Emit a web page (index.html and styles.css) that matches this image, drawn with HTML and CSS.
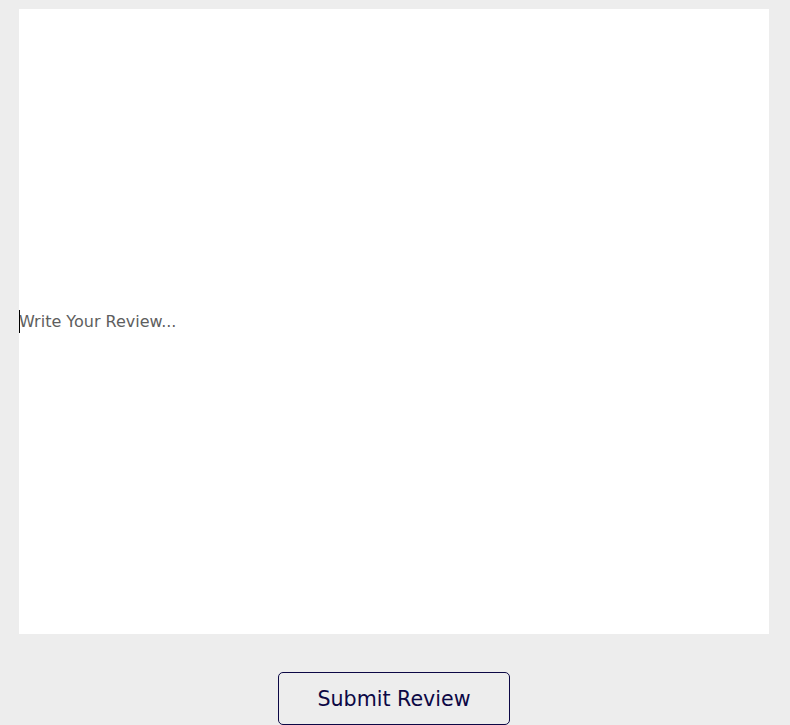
FILE: index.html
```html
<!DOCTYPE html>
<html lang="en">
<head>
<meta charset="utf-8">
<title>Review</title>
<link rel="stylesheet" href="styles.css">
</head>
<body>
<form class="review-form">
  <div class="field">
    <input class="review-input" type="text" placeholder="Write Your Review..." autofocus>
    <span class="caret"></span>
  </div>
  <div class="actions">
    <button class="submit-btn" type="button">Submit Review</button>
  </div>
</form>
</body>
</html>
```

FILE: styles.css
```css
html, body {
  margin: 0;
  padding: 0;
  background: #ededed;
}
body {
  overflow: hidden;
  font-family: "DejaVu Sans", "Liberation Sans", sans-serif;
}
.review-form {
  display: flex;
  flex-direction: column;
  padding: 9px 21px 0 19px;
}
.field {
  position: relative;
  width: 750px;
  height: 625px;
}
.review-input {
  box-sizing: border-box;
  display: block;
  width: 750px;
  height: 625px;
  border: none;
  outline: none;
  background: #ffffff;
  padding: 0;
  margin: 0;
  font-family: "DejaVu Sans", "Liberation Sans", sans-serif;
  font-size: 16px;
  color: #222;
  caret-color: transparent;
}
.review-input::placeholder {
  color: #5e5e5e;
}
.caret {
  position: absolute;
  left: 0;
  top: 301px;
  width: 1px;
  height: 23px;
  background: #000;
}
.actions {
  display: flex;
  justify-content: center;
  padding-top: 38px;
}
.submit-btn {
  box-sizing: border-box;
  width: 232px;
  height: 53px;
  border: 1px solid #0c0845;
  border-radius: 5px;
  background: transparent;
  color: #0c0845;
  font-family: "DejaVu Sans", "Liberation Sans", sans-serif;
  font-size: 20.6px;
  cursor: pointer;
}
```
